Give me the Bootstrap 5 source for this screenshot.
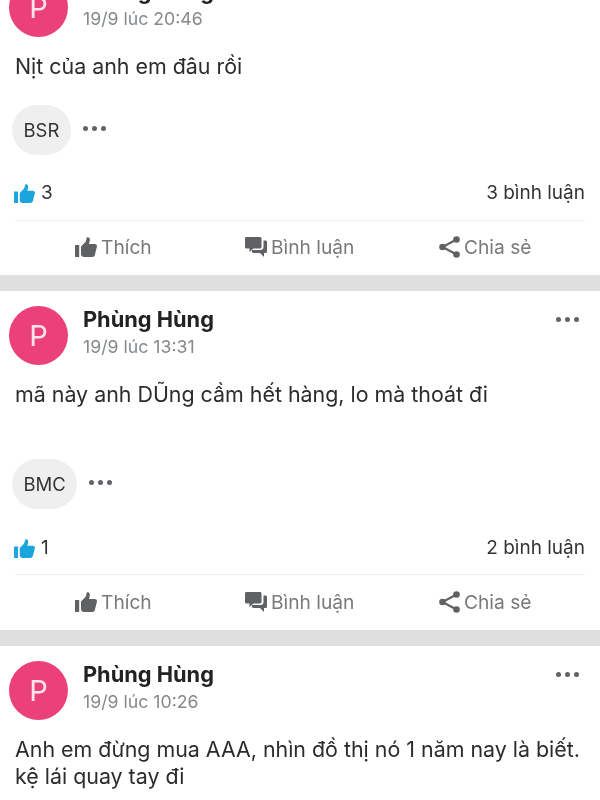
<!doctype html>
<html lang="vi">
<head>
<meta charset="utf-8">
<title>Bài viết</title>
<link rel="stylesheet" href="https://cdn.jsdelivr.net/npm/bootstrap@5.3.0/dist/css/bootstrap.min.css">
<style>
body{font-family:Inter,"Liberation Sans",sans-serif;background:#fff;color:#2b2b2b;overflow:hidden;height:800px}
.feed{margin-top:-37px;filter:blur(.35px)}
.post-item{padding:15px 15px 14px 9px}
.post-item.tail{padding-bottom:0}
.sep-bar{height:16px;background:#dfdfdf}
.avatar-dot{width:59px;height:59px;border-radius:50%;background:#ec407a;color:#fde3ec;font-size:29px;line-height:1;flex:none}
.who{font-size:21.8px;font-weight:700;color:#222;line-height:26px}
.stamp{font-size:17.7px;color:#85898c;line-height:24px;margin-top:3px}
.head-block{margin-left:15px}
.menu-dots{gap:4px;margin-top:11px;margin-right:6px}
.menu-dots i,.chip-dots i{display:block;width:5px;height:5px;border-radius:50%;background:#606468}
.post-text{font-size:21.4px;line-height:27px;margin:16px 0 0 6px;color:#2c2c2c}
.chip-row{margin-left:3px;height:50px}
.chip-row.near{margin-top:25px}
.chip-row.far{margin-top:51px}
.tag-chip{background:#efefef;border-radius:25px;height:50px;padding:0 11.500px;font-size:18.5px;color:#333;line-height:50px}
.chip-dots{gap:4px;margin-left:12px;margin-bottom:4px}
.stats-row{margin:24px 0 0 5px;height:28px;font-size:19px;color:#333}
.like-count{gap:6px}
.divider-line{height:1px;background:#f1f1f1;margin:13px 0 0 6px}
.act-row{display:grid;grid-template-columns:170px 194px auto;padding-left:60px;margin-left:6px;margin-top:12px;height:28px;font-size:19.2px;color:#77797c}
.act{gap:4px}
.far ~ .stats-row{margin-top:25px}
.far ~ .divider-line{margin-top:12px}
.far ~ .act-row{margin-top:13px}
.icon-blue{color:#1ca5dc}
.icon-grey{color:#5f6163}
</style>
</head>
<body>
<svg width="0" height="0" class="d-block" aria-hidden="true">
  <defs>
    <symbol id="thumb" viewBox="0 0 22 20"><rect x="0" y="8" width="4.2" height="12" rx=".6"/><path d="M6 9.5 10.2 5.2C11 4.2 11.4 2.8 11.5 1.2c.1-1.3 2.9-1.2 3.3.9.2 1.4-.2 3.1-.9 4.9h5.8c1.6 0 2.6 1.3 2.2 2.8l-2 7.900c-.3 1.300-1.300 2.300-2.700 2.300H9c-1.700 0-3-1.300-3-2.900z"/></symbol>
    <symbol id="bubbles" viewBox="0 0 22 20"><path d="M1.500 0h13.500c.8 0 1.500.7 1.500 1.500v8.500c0 .8-.7 1.500-1.500 1.500H8.500L4.500 15v-3.500h-3C.7 11.500 0 10.800 0 10V1.500C0 .7.700 0 1.500 0z"/><path d="M18.500 3.500h2c.8 0 1.500.7 1.500 1.500v9.500c0 .8-.7 1.500-1.500 1.500H19v4l-4-4H8.500c-.8 0-1.500-.7-1.500-1.500V13h8.500c1.700 0 3-1.300 3-3z"/></symbol>
    <symbol id="share" viewBox="0 0 21 22"><circle cx="17.500" cy="3.500" r="3.300"/><circle cx="3.500" cy="11" r="3.300"/><circle cx="17.500" cy="18.500" r="3.300"/><path d="M3.500 11 17.500 3.500M3.500 11l14 7.500" fill="none" stroke="currentColor" stroke-width="2"/></symbol>
  </defs>
</svg>
<main class="feed">

  <article class="post-item">
    <div class="d-flex align-items-start">
      <div class="avatar-dot d-flex align-items-center justify-content-center">P</div>
      <div class="head-block flex-grow-1">
        <div class="who">Phùng Hùng</div>
        <div class="stamp">19/9 lúc 20:46</div>
      </div>
      <div class="menu-dots d-flex"><i></i><i></i><i></i></div>
    </div>
    <p class="post-text">Nịt của anh em đâu rồi</p>
    <div class="chip-row near d-flex align-items-center">
      <span class="tag-chip">BSR</span>
      <span class="chip-dots d-flex"><i></i><i></i><i></i></span>
    </div>
    <div class="stats-row d-flex justify-content-between align-items-center">
      <span class="like-count d-flex align-items-center"><svg width="21" height="19" class="icon-blue" fill="currentColor"><use href="#thumb"/></svg>3</span>
      <span>3 bình luận</span>
    </div>
    <div class="divider-line"></div>
    <div class="act-row">
      <span class="act d-flex align-items-center"><svg width="22" height="20" fill="currentColor" class="icon-grey"><use href="#thumb"/></svg>Thích</span>
      <span class="act d-flex align-items-center"><svg width="22" height="20" fill="currentColor" class="icon-grey"><use href="#bubbles"/></svg>Bình luận</span>
      <span class="act d-flex align-items-center"><svg width="21" height="22" fill="currentColor" class="icon-grey"><use href="#share"/></svg>Chia sẻ</span>
    </div>
  </article>
  <div class="sep-bar"></div>

  <article class="post-item">
    <div class="d-flex align-items-start">
      <div class="avatar-dot d-flex align-items-center justify-content-center">P</div>
      <div class="head-block flex-grow-1">
        <div class="who">Phùng Hùng</div>
        <div class="stamp">19/9 lúc 13:31</div>
      </div>
      <div class="menu-dots d-flex"><i></i><i></i><i></i></div>
    </div>
    <p class="post-text">mã này anh DŨng cầm hết hàng, lo mà thoát đi</p>
    <div class="chip-row far d-flex align-items-center">
      <span class="tag-chip">BMC</span>
      <span class="chip-dots d-flex"><i></i><i></i><i></i></span>
    </div>
    <div class="stats-row d-flex justify-content-between align-items-center">
      <span class="like-count d-flex align-items-center"><svg width="21" height="19" class="icon-blue" fill="currentColor"><use href="#thumb"/></svg>1</span>
      <span>2 bình luận</span>
    </div>
    <div class="divider-line"></div>
    <div class="act-row">
      <span class="act d-flex align-items-center"><svg width="22" height="20" fill="currentColor" class="icon-grey"><use href="#thumb"/></svg>Thích</span>
      <span class="act d-flex align-items-center"><svg width="22" height="20" fill="currentColor" class="icon-grey"><use href="#bubbles"/></svg>Bình luận</span>
      <span class="act d-flex align-items-center"><svg width="21" height="22" fill="currentColor" class="icon-grey"><use href="#share"/></svg>Chia sẻ</span>
    </div>
  </article>
  <div class="sep-bar"></div>

  <article class="post-item tail">
    <div class="d-flex align-items-start">
      <div class="avatar-dot d-flex align-items-center justify-content-center">P</div>
      <div class="head-block flex-grow-1">
        <div class="who">Phùng Hùng</div>
        <div class="stamp">19/9 lúc 10:26</div>
      </div>
      <div class="menu-dots d-flex"><i></i><i></i><i></i></div>
    </div>
    <p class="post-text">Anh em đừng mua AAA, nhìn đồ thị nó 1 năm nay là biết.<br>kệ lái quay tay đi</p>
  </article>

</main>
</body>
</html>
